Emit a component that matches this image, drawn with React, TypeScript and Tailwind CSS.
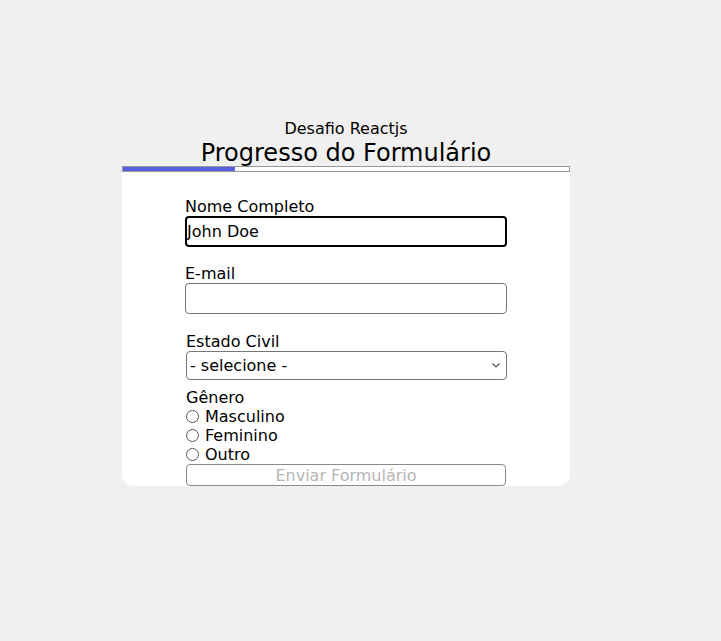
import React, { useState } from "react";

export default function App() {
  const [nome, setNome] = useState("John Doe");
  const [email, setEmail] = useState("");
  const [estado, setEstado] = useState("");
  const [genero, setGenero] = useState("");

  const progresso = 25;

  return (
    <div
      className="min-h-[641px] bg-[#f0f0f0] pt-[119px] text-black leading-[19px]"
      style={{ fontFamily: '"DejaVu Sans", Verdana, sans-serif' }}
    >
      <div className="ml-[122px] w-[448px]">
        <p className="text-center text-[16px] leading-[19px]">Desafio Reactjs</p>
        <h1 className="h-[28px] text-center text-[24px] leading-[31px]">Progresso do Formulário</h1>
        <div className="h-[6px] w-full border border-[#999] bg-white">
          <div className="h-full bg-[#5a5ee0]" style={{ width: `${progresso}%` }} />
        </div>
        <form className="rounded-b-[12px] bg-white pt-[25px]">
          <div className="mx-auto w-[322px]">
            <label className="block text-[16px] leading-[19px]">Nome Completo</label>
            <input
              value={nome}
              onChange={(e) => setNome(e.target.value)}
              className="block h-[31px] w-full rounded-[4px] border-2 border-black px-0 text-[16px] outline-none"
            />
            <div className="h-[17px]" />
            <label className="block text-[16px] leading-[19px]">E-mail</label>
            <input
              value={email}
              onChange={(e) => setEmail(e.target.value)}
              className="block h-[31px] w-full rounded-[4px] border border-[#767676] text-[16px] outline-none"
            />
            <div className="h-[18px]" />
            <div className="pl-[1px]">
              <label className="block text-[16px] leading-[19px]">Estado Civil</label>
              <div className="relative">
                <select
                  value={estado}
                  onChange={(e) => setEstado(e.target.value)}
                  className="block h-[29px] w-full appearance-none rounded-[4px] border border-[#767676] pl-[3px] text-[16px] outline-none"
                >
                  <option value="">- selecione -</option>
                  <option value="solteiro">Solteiro</option>
                  <option value="casado">Casado</option>
                  <option value="divorciado">Divorciado</option>
                  <option value="viuvo">Viúvo</option>
                </select>
                <svg
                  className="pointer-events-none absolute right-[7px] top-[12px]"
                  width="8"
                  height="5"
                  viewBox="0 0 8 5"
                  fill="none"
                >
                  <path d="M0.5 0.5L4 4L7.5 0.5" stroke="#555" strokeWidth="1.2" />
                </svg>
              </div>
              <div className="h-[8px]" />
              <p className="text-[16px] leading-[19px]">Gênero</p>
              {["Masculino", "Feminino", "Outro"].map((g) => (
                <label key={g} className="flex h-[19px] items-center text-[16px]">
                  <input
                    type="radio"
                    name="genero"
                    checked={genero === g}
                    onChange={() => setGenero(g)}
                    className="m-0 mr-[6px] h-[13px] w-[13px] appearance-none rounded-full border border-[#555] bg-white checked:border-[4px] checked:border-[#0075ff]"
                  />
                  {g}
                </label>
              ))}
              <button
                type="button"
                disabled
                className="block h-[22px] w-[320px] rounded-[4px] border border-[#8a8a8a] text-[16px] leading-[19px] text-[#b5b5b5]"
              >
                Enviar Formulário
              </button>
            </div>
          </div>
        </form>
      </div>
    </div>
  );
}
